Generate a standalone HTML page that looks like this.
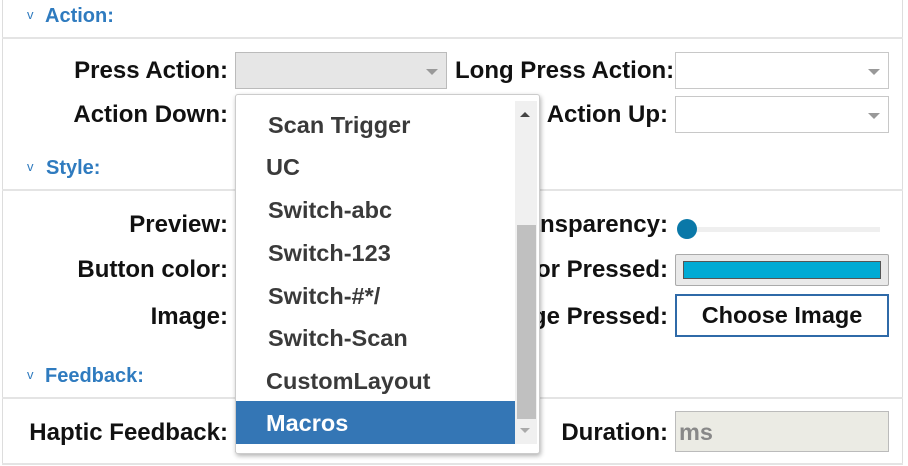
<!DOCTYPE html>
<html><head><meta charset="utf-8"><style>
*{margin:0;padding:0;box-sizing:border-box}
body{width:908px;height:466px;background:#fff;position:relative;overflow:hidden;font-family:"Liberation Sans",Arial,sans-serif}
.a{position:absolute}
.lbl{position:absolute;font-size:24px;font-weight:bold;color:#111;white-space:nowrap;text-align:right;line-height:26px}
.hd{position:absolute;font-size:20px;font-weight:bold;color:#2f7bbf;line-height:22px}
.chev{position:absolute;font-size:13px;color:#2f7bbf;font-weight:normal}
.line{position:absolute;left:2px;width:901px;height:2px;background:#e4e4e4}
.sel{position:absolute;border:1px solid #c8c8c8;background:#fff}
.arr{position:absolute;right:8px;top:50%;margin-top:-2px;width:0;height:0;border-left:6px solid transparent;border-right:6px solid transparent;border-top:6px solid #999}
.it{position:absolute;left:32px;font-size:23.5px;font-weight:bold;color:#3a3a3a;line-height:26px;white-space:nowrap}
</style></head><body>
<div class="a" style="left:2px;top:0;width:1px;height:465px;background:#ddd"></div>
<div class="a" style="left:902px;top:0;width:1px;height:465px;background:#ddd"></div>
<div class="a" style="left:2px;top:463px;width:901px;height:2px;background:#e4e4e4"></div>

<span class="chev" style="left:27px;top:7px">v</span>
<div class="hd" style="left:45px;top:5px">Action:</div>
<div class="line" style="top:37px"></div>

<div class="lbl" style="right:680px;top:58px">Press Action:</div>
<div class="sel" style="left:235px;top:52px;width:212px;height:37px;background:#e6e6e6;border-color:#bbb"><div class="arr"></div></div>
<div class="lbl" style="left:455px;top:58px">Long Press Action:</div>
<div class="sel" style="left:675px;top:52px;width:214px;height:37px"><div class="arr"></div></div>

<div class="lbl" style="right:680px;top:102px">Action Down:</div>
<div class="sel" style="left:235px;top:96px;width:212px;height:37px"></div>
<div class="lbl" style="right:240px;top:102px">Action Up:</div>
<div class="sel" style="left:675px;top:96px;width:214px;height:37px"><div class="arr"></div></div>

<span class="chev" style="left:27px;top:159px">v</span>
<div class="hd" style="left:46px;top:157px">Style:</div>
<div class="line" style="top:189px"></div>

<div class="lbl" style="right:680px;top:212px">Preview:</div>
<div class="lbl" style="right:240px;top:212px">Transparency:</div>
<div class="a" style="left:686px;top:227px;width:194px;height:5px;background:#efefef"></div>
<div class="a" style="left:677px;top:219px;width:20px;height:20px;border-radius:50%;background:#0a78a8"></div>

<div class="lbl" style="right:680px;top:257px">Button color:</div>
<div class="a" style="left:235px;top:254px;width:212px;height:32px;border:1px solid #bbb;background:#eee"></div>
<div class="lbl" style="right:240px;top:257px">Color Pressed:</div>
<div class="a" style="left:675px;top:254px;width:214px;height:32px;border:1px solid #aaa;background:#e9e9e9;border-radius:2px"><div class="a" style="left:7px;top:6px;width:198px;height:18px;background:#00aad4;border:1px solid #555"></div></div>

<div class="lbl" style="right:680px;top:304px">Image:</div>
<div class="a" style="left:235px;top:294px;width:212px;height:43px;border:2px solid #2f6aa8"></div>
<div class="lbl" style="right:240px;top:304px">Image Pressed:</div>
<div class="a" style="left:675px;top:294px;width:214px;height:43px;border:2px solid #2f6aa8;background:#fff;font-size:23.5px;font-weight:bold;color:#111;text-align:center;line-height:39px">Choose Image</div>

<span class="chev" style="left:27px;top:367px">v</span>
<div class="hd" style="left:45px;top:365px">Feedback:</div>
<div class="line" style="top:397px"></div>

<div class="lbl" style="right:680px;top:420px">Haptic Feedback:</div>
<div class="a" style="left:235px;top:411px;width:212px;height:41px;border:1px solid #bbb"></div>
<div class="lbl" style="right:240px;top:420px">Duration:</div>
<div class="a" style="left:675px;top:411px;width:214px;height:41px;border:1px solid #bbb;background:#ebebe4;font-size:23.5px;font-weight:bold;color:#888;line-height:40px;padding-left:3px">ms</div>

<div class="a" style="left:235px;top:94px;width:305px;height:360px;background:#fff;border:1px solid #ccc;border-radius:3px;box-shadow:1px 2px 5px rgba(0,0,0,.3);overflow:hidden">
  <div class="it" style="top:17px">Scan Trigger</div>
  <div class="it" style="top:59px;left:30px">UC</div>
  <div class="it" style="top:102px">Switch-abc</div>
  <div class="it" style="top:145px">Switch-123</div>
  <div class="it" style="top:188px">Switch-#*/</div>
  <div class="it" style="top:230px">Switch-Scan</div>
  <div class="it" style="top:273px;left:30px">CustomLayout</div>
  <div class="a" style="left:0;top:306px;width:279px;height:43px;background:#3476b5"></div>
  <div class="it" style="top:315px;left:30px;color:#fff">Macros</div>
  <div class="a" style="left:279px;top:6px;width:22px;height:343px;background:#f0f0f0"></div>
  <div class="a" style="left:281px;top:130px;width:19px;height:194px;background:#c0c0c0"></div>
  <div class="a" style="left:284px;top:17px;width:0;height:0;border-left:5px solid transparent;border-right:5px solid transparent;border-bottom:5px solid #444"></div>
  <div class="a" style="left:284px;top:333px;width:0;height:0;border-left:5px solid transparent;border-right:5px solid transparent;border-top:5px solid #aaa"></div>
</div>
</body></html>
